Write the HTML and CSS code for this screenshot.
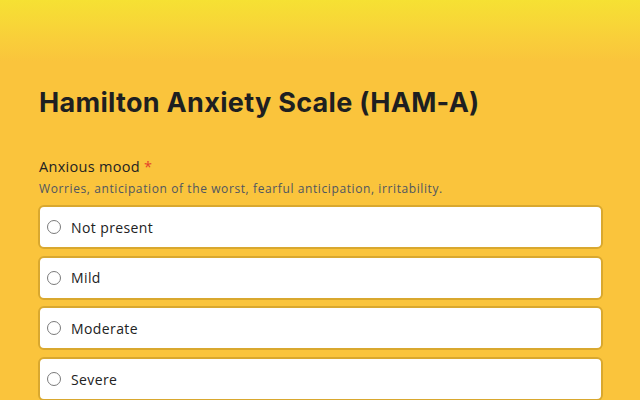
FILE: index.html
```html
<!DOCTYPE html>
<html>
<head>
<meta charset="utf-8">
<link rel="stylesheet" href="styles.css">
</head>
<body>
<div class="page">
  <h1 class="title">Hamilton Anxiety Scale (HAM-A)</h1>
  <div class="question">
    <div class="label">Anxious mood <span class="req">*</span></div>
    <div class="desc">Worries, anticipation of the worst, fearful anticipation, irritability.</div>
    <div class="options">
      <label class="option"><span class="radio"></span><span class="text">Not present</span></label>
      <label class="option"><span class="radio"></span><span class="text">Mild</span></label>
      <label class="option"><span class="radio"></span><span class="text">Moderate</span></label>
      <label class="option"><span class="radio"></span><span class="text">Severe</span></label>
    </div>
  </div>
</div>
</body>
</html>
```
FILE: styles.css
```css
html, body { margin: 0; padding: 0; }
body {
  width: 640px;
  height: 400px;
  overflow: hidden;
  background: linear-gradient(to bottom, #f6e133 0px, #f9ce3a 40px, #fac43c 62px, #fac43c 100%);
  font-family: "Open Sans", "Liberation Sans", sans-serif;
  color: #1f2123;
}
.page {
  padding: 84px 38px 0 38px;
}
.title {
  margin: 0 0 0 1px;
  font-family: Inter, "Liberation Sans", sans-serif;
  font-weight: 700;
  font-size: 27px;
  line-height: 38px;
  letter-spacing: 0.3px;
  color: #1e1f21;
}
.question { margin-top: 35px; }
.label {
  margin-left: 1px;
  font-size: 14.5px;
  font-weight: 500;
  line-height: 20px;
  letter-spacing: 0.3px;
  color: #222;
}
.req { color: #e4412b; }
.desc {
  margin: 3px 0 0 1px;
  font-size: 12px;
  line-height: 18px;
  letter-spacing: 0.6px;
  color: #4f5660;
}
.options {
  margin-top: 7px;
  display: flex;
  flex-direction: column;
  gap: 6.7px;
  width: 565px;
}
.option {
  display: flex;
  align-items: center;
  height: 40px;
  background: #fff;
  border: 2px solid #d9a82f;
  border-radius: 6px;
  padding-left: 7px;
}
.radio {
  border: 1px solid #7a7a7a;
  border-radius: 50%;
  box-sizing: border-box;
  width: 14px;
  height: 14px;
}
.text {
  margin-left: 10px;
  font-size: 14px;
  color: #222;
  letter-spacing: 0.4px;
}
```
